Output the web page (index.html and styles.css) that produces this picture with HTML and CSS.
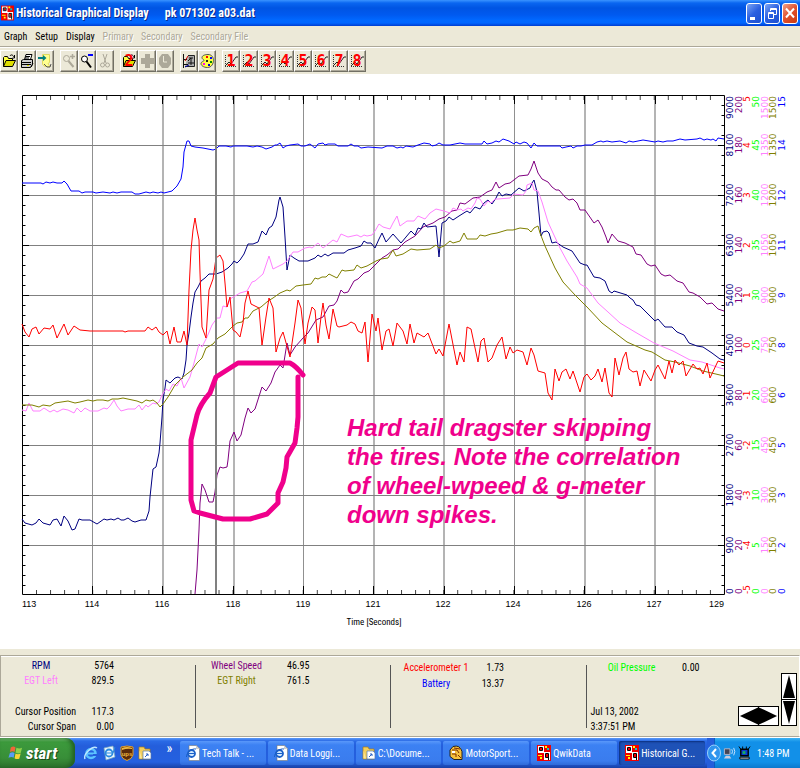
FILE: index.html
```html
<!DOCTYPE html>
<html lang="en">
<head>
  <meta charset="utf-8">
  <title>Historical Graphical Display</title>
  <link rel="stylesheet" href="styles.css">
</head>
<body>
  <!-- shared icons -->
  <svg class="defs" width="0" height="0" aria-hidden="true">
    <symbol id="app" viewBox="0 0 14 16">
      <path fill="#f00000" d="M0 0h14v16H0z"/>
      <path fill="#fff" d="M1 1h6v7H1zM7 7h6v8H7z"/>
      <path fill="#f00000" d="M3 3h2v2H3zM9 9h2v3H9z"/>
      <path fill="none" stroke="#000" d="M2.500 2.500h3v3h-3zM8.500 8.500h3v4h-3zM11.500 12v3"/>
      <path fill="#ff0" d="M8 1h2v2H8zM1 10h4v1H1zM3 12h2v2H3z"/>
      <path fill="#0cc" d="M10 3h2v2h-2z"/>
    </symbol>
    <symbol id="ie" viewBox="0 0 14 16">
      <circle cx="7" cy="8.500" r="4.500" fill="none" stroke="#5cc4ff" stroke-width="2.600"/>
      <path d="M3 8.500h8" stroke="#5cc4ff" stroke-width="2"/>
      <path d="M9 10h4" stroke="#245edb" stroke-width="2"/>
      <path d="M1 14C-1 9 9 0 13 3" fill="none" stroke="#bfe8ff" stroke-width="1.400"/>
    </symbol>
    <symbol id="page" viewBox="0 0 14 16">
      <path fill="#fff" stroke="#777" stroke-width=".6" d="M3 .5h7.500l3 3V15.500H3z"/>
      <path fill="#ccc" d="M10 .5v3.500h3.500z"/>
      <circle cx="5.500" cy="8.500" r="3.500" fill="#cfe8ff" stroke="#1a5fc8" stroke-width="1.800"/>
      <path d="M3 8.500h5.500M.5 12C0 8 6 3 10 4" stroke="#1a5fc8" fill="none"/>
    </symbol>
    <symbol id="folder" viewBox="0 0 14 16">
      <path fill="#f5cf5b" stroke="#a77a1a" stroke-width=".7" d="M1 2h5l1 2h5v10H1z"/>
      <path fill="#fff" stroke="#5577aa" stroke-width=".7" d="M5 6h6l2 2v6H5z"/>
      <path fill="#fbe698" d="M1.500 5.500L4 13.500H1.500z"/>
      <path stroke="#2a62c8" d="M7 12l3-3M8 9h2v2" fill="none"/>
    </symbol>
    <symbol id="open" viewBox="0 0 14 16">
      <path fill="#ffff40" stroke="#000" d="M1.500 13.500v-9l1-1h3l1 2h4v2"/>
      <path fill="#dede00" stroke="#000" d="M1.500 13.500l2.500-6h9.500l-3 6z"/>
      <path fill="none" stroke="#000" d="M8 3c1-2 3-1 4 1M12.500 2v3h-2"/>
    </symbol>
    <symbol id="grid" viewBox="0 0 14 16">
      <path stroke="#333" stroke-dasharray="1 1" d="M1.500 2v12M1 13.500h12"/>
      <path fill="none" stroke="#222" d="M2 12l3-3 2 2 5-7h2"/>
    </symbol>
  </svg>

  <header class="titlebar">
    <svg class="app-icon"><use href="#app"/></svg>
    <h1>Historical Graphical Display</h1>
    <span class="file-name">pk 071302 a03.dat</span>
    <div class="window-buttons">
      <button aria-label="Minimize"><svg viewBox="0 0 14 18"><path fill="#fff" d="M3 13h5v3H3z"/></svg></button>
      <button aria-label="Restore"><svg viewBox="0 0 14 18"><path fill="none" stroke="#fff" d="M5.500 7V4.500h6v6H9M3.500 8.500h5v6h-5zM5 5.500h6M3 9.500h6"/></svg></button>
      <button class="close" aria-label="Close"><svg viewBox="0 0 14 18"><path stroke="#fff" stroke-width="2" d="M3 4.500l8 9M11 4.500l-8 9"/></svg></button>
    </div>
  </header>

  <nav class="menu">
    <button>Graph</button>
    <button>Setup</button>
    <button>Display</button>
    <button disabled>Primary</button>
    <button disabled>Secondary</button>
    <button disabled>Secondary File</button>
  </nav>

  <div class="toolbar">
    <div class="group">
      <button aria-label="Open"><svg><use href="#open"/></svg></button>
      <button aria-label="Print"><svg viewBox="0 0 14 16"><path fill="#fff" stroke="#000" d="M4.500 6.500l1.500-5h6l-1.500 5z"/><path fill="#ccc" stroke="#000" d="M1.500 7.500l2-1h9v5l-2 3h-9z"/><path stroke="#000" d="M6 3.500h4M5 5h4M2 9.500h9M2 11.500h9M11 14l2-4"/><path stroke="#dd0" d="M7 12.500h2"/></svg></button>
      <button aria-label="Exit"><svg viewBox="0 0 14 16"><path fill="#ffff90" stroke="#e0d860" d="M4.500 1.500h7v8l-1.500 1 2 3H7l-2.500-2z"/><path fill="#008080" d="M0 4h5V2l3.500 3L5 8V6H0z"/><path stroke="#555" d="M6 11l3 3h3l1-3" fill="none"/></svg></button>
    </div>
    <div class="group">
      <button disabled aria-label="Zoom in"><svg viewBox="0 0 14 16"><circle cx="4.500" cy="5.500" r="3" fill="none" stroke="#aca899"/><path stroke="#aca899" stroke-width="2" d="M6.500 8l5 6"/><path stroke="#aca899" stroke-width="1.500" d="M8 3.500h5M10.500 1v5"/></svg></button>
      <button aria-label="Zoom out"><svg viewBox="0 0 14 16"><circle cx="4.500" cy="6" r="3" fill="#fff" stroke="#000"/><path stroke="#000" stroke-width="2" d="M6.500 8.500l4.500 6"/><path stroke="#00f" stroke-width="2" d="M8 2h5"/></svg></button>
      <button disabled aria-label="Cut"><svg viewBox="0 0 14 16"><path fill="none" stroke="#aca899" d="M5 1l3 9M9 1L6 10"/><circle cx="4.500" cy="12" r="2" fill="none" stroke="#aca899"/><circle cx="9.500" cy="12" r="2" fill="none" stroke="#aca899"/></svg></button>
    </div>
    <div class="group">
      <button aria-label="Open second file"><svg viewBox="0 0 14 16"><use href="#open" width="14" height="16"/><text class="digit" x="7" y="13">2</text></svg></button>
      <button disabled aria-label="Add"><svg viewBox="0 0 14 16"><path fill="#aca899" d="M5 1h5v4h4v6h-4v4H5v-4H1V5h4z"/></svg></button>
      <button disabled aria-label="Overlay"><svg viewBox="0 0 14 16"><path fill="#aca899" d="M4 1h6l3 4v6l-3 4H4l-3-4V5z"/><path stroke="#ece9d8" fill="none" d="M5.500 3v6H9"/></svg></button>
    </div>
    <div class="group">
      <button aria-label="Graph setup"><svg viewBox="0 0 14 16"><path fill="#aaa" stroke="#222" d="M6 2.500h6.500v11H3"/><path stroke="#111" fill="none" d="M1.500 1v14M2 6.500h3M2 11.500h4M7 5h4M6 8l3-3v7M6 10h6"/><path stroke="#c00" d="M3 8l3-5"/><path stroke="#00a" d="M3 14l4-2"/></svg></button>
      <button aria-label="Colors"><svg viewBox="0 0 14 16"><path fill="#ffff40" stroke="#555" d="M8 1.500c4 0 5.500 3 5.500 6s-2 7-6 7-6.500-2-6.500-4 3-2 3-3-2-1-2-3 3-3 6-3z"/><path fill="#f00" d="M6 3h2v2H6z"/><path fill="#00f" d="M10 4h2v2h-2z"/><path fill="#080" d="M10 8h2v2h-2z"/><path fill="#f0f" d="M3 10h2v2H3z"/><path fill="#00c" d="M8 11h2v2H8z"/><path fill="#222" d="M6 7h2v2H6z"/></svg></button>
    </div>
    <div class="group" id="graphButtons"></div>
  </div>

  <main class="chart">
    <svg viewBox="0 74 800 575" role="img" aria-label="Logged channels against time">
      <!-- grid -->
      <path class="grid-v" d="M92.500 96v498M303.500 96v498M514.500 96v498"/>
      <path class="grid-v wide" d="M163 96v498M234 96v498M374 96v498M444 96v498M585 96v498M655 96v498"/>
      <path class="grid-h" d="M22 145.500h702M22 195.500h702M22 245.500h702M22 295.500h702M22 345.500h702M22 395.500h702M22 445.500h702M22 495.500h702M22 545.500h702"/>
      <path class="frame" d="M22.500 95.500h702v499h-702z"/>
      <path class="tick-y" d="M24 105v489M723 105v489"/>
      <path class="tick-x" d="M36 98h688M36 592h688"/>
      <path class="tick-major" d="M92.500 96v8m0 482v8M162.500 96v8m0 482v8M233.500 96v8m0 482v8M303.500 96v8m0 482v8M373.500 96v8m0 482v8M444.500 96v8m0 482v8M514.500 96v8m0 482v8M584.500 96v8m0 482v8M655.500 96v8m0 482v8M22 145.500h7m689 0h6M22 195.500h7m689 0h6M22 245.500h7m689 0h6M22 295.500h7m689 0h6M22 345.500h7m689 0h6M22 395.500h7m689 0h6M22 445.500h7m689 0h6M22 495.500h7m689 0h6M22 545.500h7m689 0h6"/>

      <!-- channels -->
      <polyline class="line battery" points="22,183 41,183 43,184 46,182 50,183 53,182 57,183 62,183 64,181 67,184 71,191 79,191 82,193 85,192 93,192 96,193 103,192 110,193 113,192 117,193 121,192 132,192 135,194 139,194 146,192 150,193 153,192 158,193 161,192 164,193 168,192 172,191 177,186 181,179 183,167 184,152 187,141 189,141 191,146 195,147 203,148 213,150 216,149 219,146 226,146 231,147 233,146 247,146 253,147 257,146 262,147 266,149 272,147 275,145 277,145 280,143 283,148 286,146 290,145 298,144 301,146 305,146 310,144 315,148 318,144 323,143 325,145 328,144 335,144 338,146 348,146 351,144 354,146 358,146 361,148 368,147 382,148 387,146 393,146 397,148 401,147 403,148 406,146 413,147 418,145 424,143 430,144 432,146 436,145 439,143 443,145 450,145 460,143 465,144 473,144 482,144 484,141 487,144 492,143 496,141 499,142 503,139 509,141 514,144 516,142 520,144 524,142 527,143 531,148 534,143 537,146 557,146 560,146 562,148 566,147 571,146 573,148 577,146 581,146 585,145 592,145 597,142 601,141 603,142 607,141 612,142 620,141 626,143 629,141 633,142 643,140 655,142 658,141 663,142 667,141 673,141 680,139 685,140 697,139 700,138 704,140 707,139 711,140 713,139 716,141 718,138 724,139"/>
      <polyline class="line wheel" points="195,594 197,570 199,530 200,503 202,484 205,490 209,502 213,502 215,492 217,475 220,467 223,468 227,467 228,460 230,441 234,432 237,441 241,435 245,418 248,408 251,413 255,409 262,387 266,391 271,383 275,372 280,365 283,368 287,343 290,355 295,347 303,338 308,333 316,320 323,317 329,306 334,305 337,301 341,290 344,293 348,292 354,281 358,279 364,273 369,271 382,258 387,255 393,250 398,249 405,242 415,236 423,227 433,223 439,219 445,217 452,211 457,210 460,203 465,204 473,198 480,197 487,192 492,190 496,182 499,188 505,184 510,183 519,176 528,175 531,169 534,161 538,173 542,179 548,182 552,187 556,190 559,190 565,197 569,200 573,199 577,203 580,210 585,210 594,223 598,220 602,227 606,237 608,243 612,234 618,241 625,243 633,247 636,254 641,255 647,264 651,266 655,265 661,274 665,276 670,275 677,281 683,283 689,292 693,293 700,297 707,304 712,303 718,309 724,311"/>
      <polyline class="line rpm" points="22,519 25,523 32,525 36,523 39,519 43,523 50,525 53,520 57,519 61,526 64,516 68,521 72,530 75,529 79,519 82,520 90,520 97,524 104,519 107,520 111,519 114,520 118,518 121,520 124,520 128,518 132,521 135,522 141,520 146,520 149,511 150,497 153,469 156,467 159,453 160,443 162,417 163,400 165,388 166,380 170,383 175,378 178,377 182,379 184,373 186,360 187,345 189,333 191,317 193,303 195,292 198,287 201,281 205,278 209,274 216,274 222,272 228,268 232,264 234,261 237,263 240,260 244,254 248,244 253,244 258,242 262,231 266,235 269,228 272,226 276,217 279,200 280,197 283,207 285,237 287,270 290,255 294,258 299,261 308,261 315,258 318,255 321,257 325,254 328,256 333,253 344,253 348,250 355,248 361,246 364,241 367,243 371,243 375,248 379,239 382,233 386,242 393,234 401,243 411,231 415,235 418,228 421,229 424,223 427,227 436,226 439,257 442,223 446,221 449,217 453,220 459,216 467,211 470,213 475,207 480,209 484,203 488,200 492,204 496,198 499,192 502,196 506,194 511,195 519,188 524,191 530,188 532,183 534,180 537,192 539,213 541,236 543,232 547,231 549,233 552,243 556,242 563,247 572,251 580,263 585,265 587,265 594,277 600,278 605,281 609,291 612,293 614,291 627,295 630,298 633,300 636,305 640,306 655,321 658,319 665,327 672,327 677,332 684,335 689,343 697,346 703,347 712,353 720,359 724,360"/>
      <polyline class="line egt-left" points="22,410 26,411 29,403 33,411 40,411 44,408 50,412 54,410 57,412 63,409 68,410 74,413 77,408 81,412 85,408 90,411 98,411 104,408 107,409 110,406 114,400 117,406 121,411 128,409 135,409 139,405 142,410 146,405 148,407 153,403 156,404 159,402 162,395 166,389 169,391 173,384 177,386 181,378 184,388 190,377 194,363 199,344 202,347 207,337 212,325 217,318 220,318 223,306 227,307 230,299 240,293 247,291 252,282 255,281 263,274 266,265 269,256 273,269 277,267 283,264 287,261 293,252 298,252 305,248 310,247 312,248 318,243 323,248 328,244 333,240 337,242 341,234 348,237 357,235 361,237 364,235 367,236 372,235 375,231 379,224 383,227 390,229 393,223 397,216 400,226 407,221 414,221 418,216 425,219 430,213 436,209 444,211 450,213 453,208 457,210 461,209 463,211 468,208 471,209 475,203 477,198 480,199 484,206 488,201 491,203 495,199 498,199 510,198 514,194 523,195 526,191 527,185 532,183 534,190 538,191 542,202 548,222 553,233 560,248 567,261 577,277 580,284 587,288 598,303 608,312 620,323 635,332 654,343 673,351 690,360 702,362 720,368 724,369"/>
      <polyline class="line egt-right" points="22,405 32,405 39,407 43,405 50,406 55,403 68,401 75,403 80,402 88,400 93,401 97,400 103,400 108,401 112,399 118,399 123,398 137,401 142,403 146,400 150,401 153,400 157,403 160,407 163,404 168,397 175,385 183,377 192,370 197,363 202,358 206,348 213,344 218,338 225,334 233,326 237,323 242,322 245,318 248,318 253,311 261,307 268,301 273,298 280,293 287,290 290,291 296,286 303,285 311,284 315,278 318,279 322,277 326,277 329,274 337,278 342,270 345,271 354,270 357,265 361,268 367,266 376,261 381,259 388,258 393,250 396,256 403,254 411,249 417,250 430,249 436,245 439,248 444,246 450,241 453,243 460,241 464,233 467,239 477,239 480,235 485,236 491,234 497,233 507,230 513,230 520,228 528,229 531,232 534,228 538,226 540,233 545,246 555,268 563,282 575,295 587,307 602,323 627,342 645,350 652,352 665,360 675,362 690,366 703,371 720,375 724,376"/>
      <polyline class="line accel" points="22,324 25,332 29,337 32,329 36,327 39,334 44,328 50,329 53,325 57,338 64,324 68,335 74,326 80,330 90,331 100,331 123,331 125,332 128,331 145,331 148,327 152,330 156,327 159,332 163,335 167,331 170,344 174,327 177,342 181,342 184,331 187,345 189,290 191,250 193,230 195,218 197,230 199,240 200,273 202,327 206,338 209,290 213,279 216,258 220,255 223,261 225,283 227,307 230,297 233,330 236,332 240,337 243,323 245,303 248,291 251,304 259,308 262,345 266,317 269,298 273,308 276,352 280,338 283,332 290,357 295,323 298,300 301,308 305,344 308,323 312,307 315,310 318,343 321,317 323,303 326,325 329,339 333,309 337,326 339,327 347,325 351,322 355,324 358,331 362,333 365,322 368,362 372,314 376,331 378,318 382,350 386,331 389,329 393,346 397,323 403,331 407,344 410,324 414,343 417,333 424,337 428,333 436,354 439,349 443,356 446,340 449,324 457,365 460,352 464,362 467,327 471,329 478,362 481,341 484,338 488,362 492,358 497,345 502,337 506,359 510,347 513,353 517,350 523,352 527,365 531,348 534,355 538,371 545,373 548,393 552,400 555,369 559,381 562,372 566,369 570,379 573,371 580,392 584,377 587,374 591,380 595,376 598,369 602,382 605,368 609,393 612,397 615,358 619,375 623,358 626,352 629,369 633,372 637,371 640,386 644,370 651,381 655,370 658,365 665,379 669,361 672,373 675,360 679,365 683,361 686,376 693,364 697,369 700,368 703,374 707,363 710,378 718,361 724,363"/>
      <path class="cursor" d="M216 96v498"/>

      <!-- hand-drawn note -->
      <path class="marker" d="M298 377V417L297 428L295 443L287 457L286 468L283 482L278 493V503L267 514L250 519H223L200 513L194 511L191 500V440L197 415Q200 404 210 393L216 377L238 363H290Q296 366 303 375"/>
      <g class="note">
        <text x="347" y="436">Hard tail dragster skipping</text>
        <text x="347" y="465">the tires. Note the correlation</text>
        <text x="347" y="494">of wheel-wpeed &amp; g-meter</text>
        <text x="347" y="523">down spikes.</text>
      </g>

      <g id="timeLabels" class="time-labels"></g>
      <g id="scales" class="scales"></g>
      <text class="axis-title" x="374" y="625">Time [Seconds]</text>
    </svg>
  </main>

  <section class="status">
    <div class="panel">
      <div class="col">
        <dl class="readings">
          <div><dt class="rpm">RPM</dt><dd>5764</dd></div>
          <div><dt class="egt-left">EGT Left</dt><dd>829.5</dd></div>
        </dl>
        <dl class="readings cursor-info">
          <div><dt>Cursor Position</dt><dd>117.3</dd></div>
          <div><dt>Cursor Span</dt><dd>0.00</dd></div>
        </dl>
      </div>
      <div class="col">
        <dl class="readings">
          <div><dt class="wheel">Wheel Speed</dt><dd>46.95</dd></div>
          <div><dt class="egt-right">EGT Right</dt><dd>761.5</dd></div>
        </dl>
      </div>
      <div class="col">
        <dl class="readings loose">
          <div><dt class="accel">Accelerometer 1</dt><dd>1.73</dd></div>
          <div><dt class="battery">Battery</dt><dd>13.37</dd></div>
        </dl>
      </div>
      <div class="col last">
        <dl class="readings loose">
          <div><dt class="oil">Oil Pressure</dt><dd>0.00</dd></div>
        </dl>
        <div class="stamp">Jul 13, 2002<br>3:37:51 PM</div>
        <div class="arrows">
          <div class="arrows-h">
            <button aria-label="Cursor left"><svg viewBox="0 0 20 18"><path d="M1 9L20 0v18z"/></svg></button>
            <button aria-label="Cursor right"><svg viewBox="0 0 20 18"><path d="M19 9L0 0v18z"/></svg></button>
          </div>
          <div class="arrows-v">
            <button aria-label="Scale up"><svg viewBox="0 0 14 25"><path d="M7 1L13 24H1z"/></svg></button>
            <button aria-label="Scale down"><svg viewBox="0 0 14 25"><path d="M7 24L13 1H1z"/></svg></button>
          </div>
        </div>
      </div>
    </div>
  </section>

  <footer class="taskbar">
    <button class="start">
      <svg viewBox="0 0 16 18"><path fill="#f0653a" d="M3 3q3-2 5 0L7 8Q5 6.500 2 8z"/><path fill="#8fd14a" d="M9 3.500q3 1.500 6 0L13.500 9q-3 1-5.500-.5z"/><path fill="#5a9cf5" d="M2 9q3-1.500 5 0l-1 5q-2-1.500-5.500 0z"/><path fill="#fbd335" d="M8 9.500q2.500 1.500 5.500 0L12 15q-3 1-5-.5z"/></svg>
      start
    </button>
    <div class="quick">
      <button aria-label="Internet Explorer"><svg><use href="#ie"/></svg></button>
      <button aria-label="Outlook Express"><svg viewBox="0 0 14 16"><path fill="#e8f4ff" stroke="#7ab" stroke-width=".7" d="M2 3l9-2 2 11-9 3z"/><circle cx="7" cy="8" r="3.500" fill="none" stroke="#2a8be0" stroke-width="1.800"/><path stroke="#2a8be0" fill="none" d="M4 8h7l2-6"/></svg></button>
      <button aria-label="UPS"><svg viewBox="0 0 14 16"><path fill="#5a2b0a" stroke="#e0a030" d="M1 2q6-2 12 0v8q-1 4-6 5.500Q2 14 1 10z"/><path fill="#f0b840" d="M2 3q5-2 10 0v1Q7 3 2 5z"/><text class="ups" x="7" y="11">ups</text></svg></button>
      <button aria-label="Explorer"><svg><use href="#folder"/></svg></button>
    </div>
    <button class="more" aria-label="More">»</button>
    <div class="tasks">
      <button><svg><use href="#page"/></svg><span>Tech Talk - ...</span></button>
      <button><svg><use href="#page"/></svg><span>Data Loggi...</span></button>
      <button><svg><use href="#folder"/></svg><span>C:\Docume...</span></button>
      <button><svg viewBox="0 0 14 16"><path fill="#f5c13c" stroke="#222" d="M4 1.500q7-2 9 5v8H5l-4-3V5z"/><path stroke="#7a2a00" fill="none" d="M3 5h5l2 3M3 9h4v3M5 3l6 1M9 10l3 3"/><path fill="#fff" d="M3 6h3v2H3z"/></svg><span>MotorSport...</span></button>
      <button><svg><use href="#app"/></svg><span>QwikData</span></button>
      <button class="active"><svg><use href="#app"/></svg><span>Historical G...</span></button>
    </div>
    <div class="tray">
      <button class="chevron" aria-label="Show hidden icons"><svg viewBox="0 0 14 18"><ellipse cx="7" cy="9" rx="6.500" ry="8" fill="#2f95ee" stroke="#9bd0fb"/><path d="M9 5L5.500 9 9 13" fill="none" stroke="#fff" stroke-width="2"/></svg></button>
      <svg class="tray-icon" viewBox="0 0 14 16"><path fill="#445" stroke="#bbc" d="M1.500 3.500h6v6h-6z"/><path fill="#ccd" d="M3 11h4l2 3H1z"/><path fill="none" stroke="#cfe6ff" d="M9.500 4q1.500 2 0 5M11.500 2.500q2.500 4 0 8"/></svg>
      <svg class="tray-icon" viewBox="0 0 14 16"><path fill="#0a3ad0" stroke="#000" stroke-width="1.500" d="M3 4h8v7H3z"/><path fill="#19b05a" d="M5 6h3v3H5z"/><path fill="#ddd" stroke="#000" d="M2 12.500h10v2H2z"/><path stroke="#000" d="M1 1l2 3M13 1l-2 3M5 1v3M9 1v3"/></svg>
      <time>1:48 PM</time>
    </div>
  </footer>

  <script>
    const NS = 'http://www.w3.org/2000/svg';

    function addText(parent, x, y, text, anchor, cls, rotate) {
      const t = document.createElementNS(NS, 'text');
      t.setAttribute('x', x);
      t.setAttribute('y', y);
      t.setAttribute('text-anchor', anchor);
      if (cls) t.setAttribute('class', cls);
      if (rotate) t.setAttribute('transform', `rotate(-90 ${x} ${y})`);
      t.textContent = text;
      parent.appendChild(t);
    }

    // time axis
    const times = [113, 114, 116, 118, 119, 121, 122, 124, 126, 127, 129];
    const timeLabels = document.getElementById('timeLabels');
    times.forEach((t, i) => {
      const x = Math.round(22 + i * 70.2);
      const anchor = i === 0 ? 'start' : i === 10 ? 'end' : 'middle';
      addText(timeLabels, x, 607, t, anchor);
    });

    // one vertical scale per channel
    const scales = [
      { cls: 'rpm', x: 733, min: 0, step: 900 },
      { cls: 'wheel', x: 742, min: 0, step: 20 },
      { cls: 'accel', x: 750, min: -5, step: 1 },
      { cls: 'oil', x: 759, min: 0, step: 5 },
      { cls: 'egt-left', x: 768, min: 0, step: 150 },
      { cls: 'egt-right', x: 776, min: 0, step: 150 },
      { cls: 'battery', x: 785, min: 0, step: 1.5 }
    ];
    const scaleGroup = document.getElementById('scales');
    scales.forEach(s => {
      for (let i = 0; i <= 10; i++) {
        const anchor = i === 0 ? 'start' : i === 10 ? 'end' : 'middle';
        const y = i === 0 ? 594 : i === 10 ? 96 : 595 - i * 50;
        addText(scaleGroup, s.x, y, Math.round(s.min + i * s.step), anchor, s.cls, true);
      }
    });

    // graph 1-8 buttons
    const graphButtons = document.getElementById('graphButtons');
    for (let n = 1; n <= 8; n++) {
      graphButtons.innerHTML += `<button aria-label="Graph ${n}"><svg viewBox="0 0 14 16"><use href="#grid" width="14" height="16"/><text class="digit" x="7" y="13">${n}</text></svg></button>`;
    }
  </script>
</body>
</html>
```

FILE: styles.css
```css
* {
  box-sizing: border-box;
}

body {
  margin: 0;
  min-height: 100vh;
  display: flex;
  flex-direction: column;
  background: #fff;
  color: #000;
  font-family: "Roboto Condensed", Lato, "Liberation Sans", sans-serif;
  font-size: 10px;
}

button {
  margin: 0;
  padding: 0;
  border: none;
  background: none;
  color: inherit;
  font: inherit;
}

svg {
  display: block;
}

.defs {
  position: absolute;
}

/* title bar */
.titlebar {
  display: flex;
  align-items: center;
  height: 26px;
  padding: 0 2px 0 1px;
  color: #fff;
  font-size: 12px;
  font-weight: bold;
  text-shadow: 1px 1px #0a2a8c;
  background: linear-gradient(#3a93ff 0, #0a66f0 3px, #0054e3 8px, #005af0 15px, #0068ff 20px, #0066ff 23px, #003dd0 26px);
}

.app-icon {
  width: 13px;
  height: 16px;
  margin-right: 2px;
}

.titlebar h1 {
  margin: 0;
  font-size: 12px;
}

.file-name {
  margin-left: 16px;
}

.window-buttons {
  display: flex;
  gap: 2px;
  margin-left: auto;
}

.window-buttons button {
  width: 16px;
  height: 21px;
  border: 1px solid #fff;
  border-radius: 3px;
  background: linear-gradient(135deg, #7ba5f5, #2a5fe0 50%, #1c4fd0);
}

.window-buttons .close {
  background: linear-gradient(135deg, #f0a088, #e0502c 50%, #c83a10);
}

/* menu and toolbar */
.menu {
  display: flex;
  align-items: center;
  gap: 8px;
  height: 20px;
  padding-left: 4px;
  background: #ece9d8;
}

.menu button:disabled {
  color: #aca899;
  text-shadow: 1px 1px #fff;
}

.toolbar {
  display: flex;
  gap: 6px;
  height: 28px;
  padding-top: 3px;
  background: #ece9d8;
  border-top: 1px solid #aca899;
  box-shadow: inset 0 1px #fff;
}

.group {
  display: flex;
}

.group button {
  width: 18px;
  height: 22px;
  padding: 1px;
  border: 1px solid;
  border-color: #fff #716f64 #716f64 #fff;
  box-shadow: inset -1px -1px #aca899;
}

.group svg {
  width: 14px;
  height: 18px;
  overflow: visible;
}

.digit {
  fill: #f00;
  font: bold 15px "DejaVu Sans Mono", monospace;
  text-anchor: middle;
}

/* chart */
.chart {
  flex: 1;
}

.chart svg {
  width: 100%;
  height: auto;
}

.grid-v,
.grid-h,
.frame,
.tick-x,
.tick-y,
.tick-major,
.line,
.marker {
  fill: none;
}

.grid-v {
  stroke: #909090;
}

.grid-v.wide {
  stroke: #b4b4b4;
  stroke-width: 2;
}

.grid-h {
  stroke: #808080;
}

.frame,
.tick-major {
  stroke: #000;
}

.tick-y {
  stroke: #000;
  stroke-width: 3;
  stroke-dasharray: 1 9;
}

.tick-x {
  stroke: #444;
  stroke-width: 4;
  stroke-dasharray: 1 13.040;
}

.cursor {
  stroke: #808080;
  stroke-width: 2;
}

.line {
  stroke: currentColor;
  stroke-width: 1;
}

.rpm { color: #000080; }
.wheel { color: #800080; }
.accel { color: #ff0000; }
.oil { color: #00ff00; }
.egt-left { color: #ff80ff; }
.egt-right { color: #808000; }
.battery { color: #0000ff; }

.marker {
  stroke: #f0008c;
  stroke-width: 5;
  stroke-linecap: round;
  stroke-linejoin: round;
}

.note {
  fill: #f0008c;
  font: italic bold 24px "Liberation Sans", sans-serif;
}

.time-labels {
  font: 9px "Liberation Sans", sans-serif;
}

.scales {
  font: 9px "DejaVu Sans", sans-serif;
}

.scales text {
  fill: currentColor;
}

.axis-title {
  font-size: 9px;
  text-anchor: middle;
}

/* readings */
.status {
  padding: 6px 0 1px;
  background: #ece9d8;
}

.panel {
  display: grid;
  grid-template-columns: 49fr 49fr 49fr 53fr;
  height: 82px;
  padding: 2px 0;
  border: 1px solid #aca899;
  border-right-color: #fff;
  box-shadow: inset 0 1px #fff, 0 1px #fff;
}

.col {
  position: relative;
  margin: 0;
  display: flex;
  flex-direction: column;
  justify-content: space-between;
}

.col + .col::before {
  content: "";
  position: absolute;
  left: -2px;
  top: 7px;
  bottom: 6px;
  width: 1px;
  background: #555;
}

.readings {
  margin: 0;
  line-height: 15px;
  white-space: nowrap;
}

.readings.loose {
  padding-top: 2px;
  line-height: 16px;
}

.readings div {
  display: flex;
}

.readings dt {
  width: 80px;
  text-align: center;
}

.readings dd {
  width: 33px;
  margin: 0;
  text-align: right;
}

.loose dt {
  width: 88px;
}

.loose dd {
  width: 24px;
}

.cursor-info dt {
  width: 75px;
  text-align: right;
}

.cursor-info dd {
  width: 38px;
}

.stamp {
  padding-left: 3px;
  line-height: 15px;
}

.arrows {
  position: absolute;
  right: 2px;
  bottom: 8px;
  display: flex;
  align-items: flex-end;
  gap: 2px;
}

.arrows-h,
.arrows-v {
  display: flex;
  gap: 1px;
  border: 1px solid #000;
  background: #000;
}

.arrows-v {
  flex-direction: column;
}

.arrows button {
  background: #fff;
}

.arrows-h svg {
  width: 19px;
  height: 18px;
}

.arrows-v svg {
  width: 14px;
  height: 25px;
}

/* taskbar */
.taskbar {
  display: flex;
  align-items: stretch;
  height: 30px;
  color: #fff;
  background: linear-gradient(#5a9af8 0, #2a6ae6 3px, #245edb 8px, #2460e0 24px, #1941a5 30px);
}

.start {
  display: flex;
  align-items: center;
  gap: 3px;
  width: 75px;
  padding-left: 8px;
  border-radius: 0 9px 9px 0;
  font: italic bold 17px "Roboto Condensed", "Liberation Sans", sans-serif;
  text-shadow: 1px 1px #1c4a1c;
  background: linear-gradient(#7cc47c 0, #3c9a3c 4px, #388e38 20px, #2c702c 30px);
  box-shadow: inset -3px 0 4px #226022;
}

.start svg {
  width: 15px;
  height: 18px;
}

.quick {
  display: flex;
  align-items: center;
  gap: 4px;
  padding-left: 9px;
}

.quick svg,
.tasks svg {
  width: 14px;
  height: 16px;
}

.ups {
  fill: #f0b840;
  font: bold 6px "Liberation Sans", sans-serif;
  text-anchor: middle;
}

.more {
  width: 26px;
  padding: 0 0 10px 9px;
  font-size: 14px;
}

.tasks {
  flex: 1;
  display: flex;
  gap: 2px;
  padding: 3px 2px;
}

.tasks button {
  flex: 1;
  display: flex;
  align-items: center;
  gap: 2px;
  min-width: 0;
  padding-left: 6px;
  border-radius: 2px;
  white-space: nowrap;
  background: linear-gradient(#5a98fa, #3c81f3 4px, #3a7cee 20px, #2f6ad8);
}

.tasks .active {
  background: #1e52b7;
  box-shadow: inset 1px 1px 2px #0c2f7c;
}

.tray {
  display: flex;
  align-items: center;
  gap: 2px;
  width: 93px;
  background: linear-gradient(to right, #245edb 7px, #0c5ac0 7px, #0c5ac0 8px, transparent 8px), linear-gradient(#3cb4f4 0, #1290e8 4px, #1290e8 24px, #0d78cc 30px);
}

.chevron svg {
  width: 14px;
  height: 18px;
}

.tray-icon {
  width: 13px;
  height: 16px;
}

.tray time {
  margin-left: 4px;
}
```
